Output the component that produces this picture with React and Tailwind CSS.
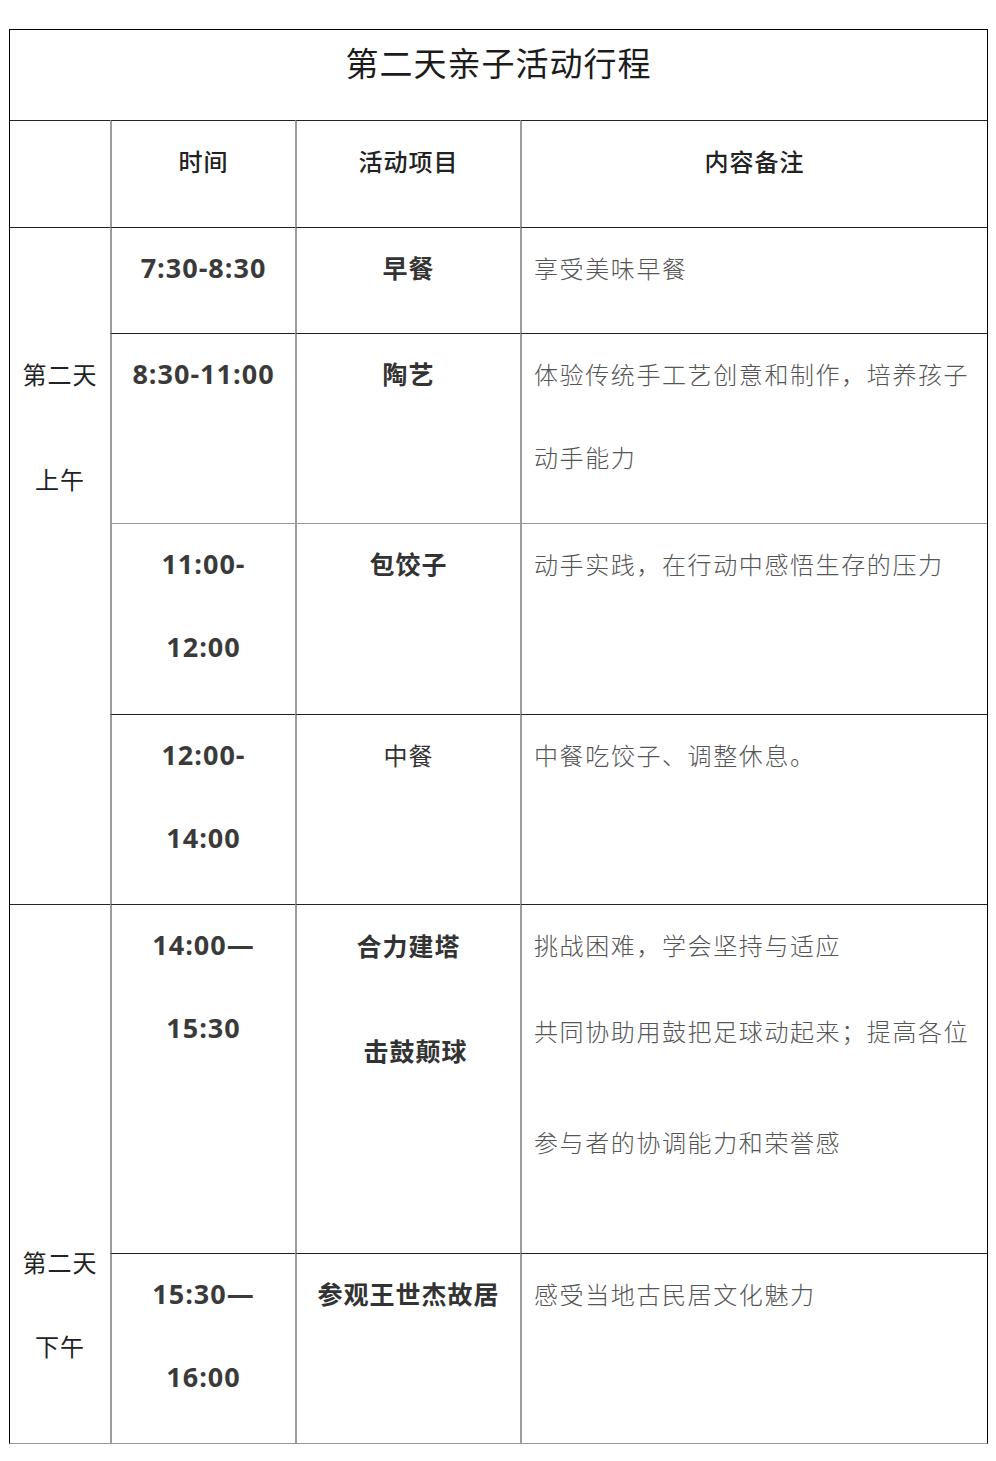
const CJK = "font-['Noto_Sans_CJK_SC',sans-serif]";
const TIME = "font-['Open_Sans','Noto_Sans_CJK_SC',sans-serif] font-bold text-[27px] tracking-[1px] text-[#3a3a3a] leading-[83px] text-center";
const ACT = `${CJK} font-bold text-[25px] tracking-[1px] text-[#333] leading-[83px] text-center`;
const NOTE = `${CJK} font-light text-[24px] tracking-[1.6px] text-[#555] leading-[83px] whitespace-nowrap`;

const cellT = 'border-t border-t-[#222]';
const cellL = 'border-l-2 border-l-[#9c9c9c]';

/* one schedule row: time / activity / notes */
function Row({ time, activity, notes, top = cellT }) {
  return (
    <>
      <div className={`${top} ${cellL} ${TIME}`}><div className="-mt-[2px]">{time}</div></div>
      <div className={`${top} ${cellL} ${ACT}`}><div className="-mt-[2px]">{activity}</div></div>
      <div className={`${top} ${cellL} pl-[12px] ${NOTE}`}><div className="-mt-[2px]">{notes}</div></div>
    </>
  );
}

export default function App() {
  return (
    <div className="min-h-[1461px] bg-white pt-[29px] pl-[9px]">
      <div className="w-[979px] border border-black border-b-[#999] grid grid-cols-[100px_185px_225px_467px] grid-rows-[90px_107px_106px_190px_191px_190px_349px_190px]">
        {/* title */}
        <div className={`col-span-4 text-center ${CJK} text-[33px] tracking-[1px] text-[#1c1c1c] leading-[64px]`}>
          第二天亲子活动行程
        </div>

        {/* header */}
        <div className={cellT} />
        {['时间', '活动项目', '内容备注'].map(h => (
          <div key={h} className={`${cellT} ${cellL} text-center ${CJK} font-medium text-[24px] tracking-[1px] text-[#222] leading-[80px]`}>
            {h}
          </div>
        ))}

        {/* morning */}
        <div className={`row-span-4 ${cellT} ${CJK} text-[24px] tracking-[1px] text-[#222] text-center`}>
          <p className="mt-[129px] leading-[34px]">第二天</p>
          <p className="mt-[71px] leading-[34px]">上午</p>
        </div>
        <Row time="7:30-8:30" activity="早餐" notes="享受美味早餐" />
        <Row
          time="8:30-11:00"
          activity="陶艺"
          notes={<>体验传统手工艺创意和制作，培养孩子<br />动手能力</>}
        />
        <Row
          top="border-t border-t-[#999]"
          time={<>11:00-<br />12:00</>}
          activity="包饺子"
          notes="动手实践，在行动中感悟生存的压力"
        />
        <div className={`${cellT} ${cellL} ${TIME}`}><div className="-mt-[2px]">12:00-<br />14:00</div></div>
        <div className={`${cellT} ${cellL} ${CJK} text-[24px] tracking-[1px] text-[#333] leading-[83px] text-center`}>
          <div className="-mt-[2px]">中餐</div>
        </div>
        <div className={`${cellT} ${cellL} pl-[12px] ${NOTE}`}><div className="-mt-[2px]">中餐吃饺子、调整休息。</div></div>

        {/* afternoon */}
        <div className={`row-span-2 ${cellT} ${CJK} text-[24px] tracking-[1px] text-[#222] text-center`}>
          <p className="mt-[340px] leading-[34px]">第二天</p>
          <p className="mt-[50px] leading-[34px]">下午</p>
        </div>
        <div className={`${cellT} ${cellL} ${TIME}`}><div className="-mt-[2px]">14:00—<br />15:30</div></div>
        <div className={`${cellT} ${cellL} ${ACT}`}>
          <p className="-mt-[2px] leading-[84px]">合力建塔</p>
          <p className="-mt-[1px] leading-[128px] pl-[14px]">击鼓颠球</p>
        </div>
        <div className={`${cellT} ${cellL} pl-[12px] ${NOTE}`}>
          <p className="-mt-[2px] leading-[84px]">挑战困难，学会坚持与适应</p>
          <p className="leading-[88px]">共同协助用鼓把足球动起来；提高各位</p>
          <p className="mt-[25px] leading-[84px]">参与者的协调能力和荣誉感</p>
        </div>
        <Row
          time={<>15:30—<br />16:00</>}
          activity="参观王世杰故居"
          notes="感受当地古民居文化魅力"
        />
      </div>
    </div>
  );
}
